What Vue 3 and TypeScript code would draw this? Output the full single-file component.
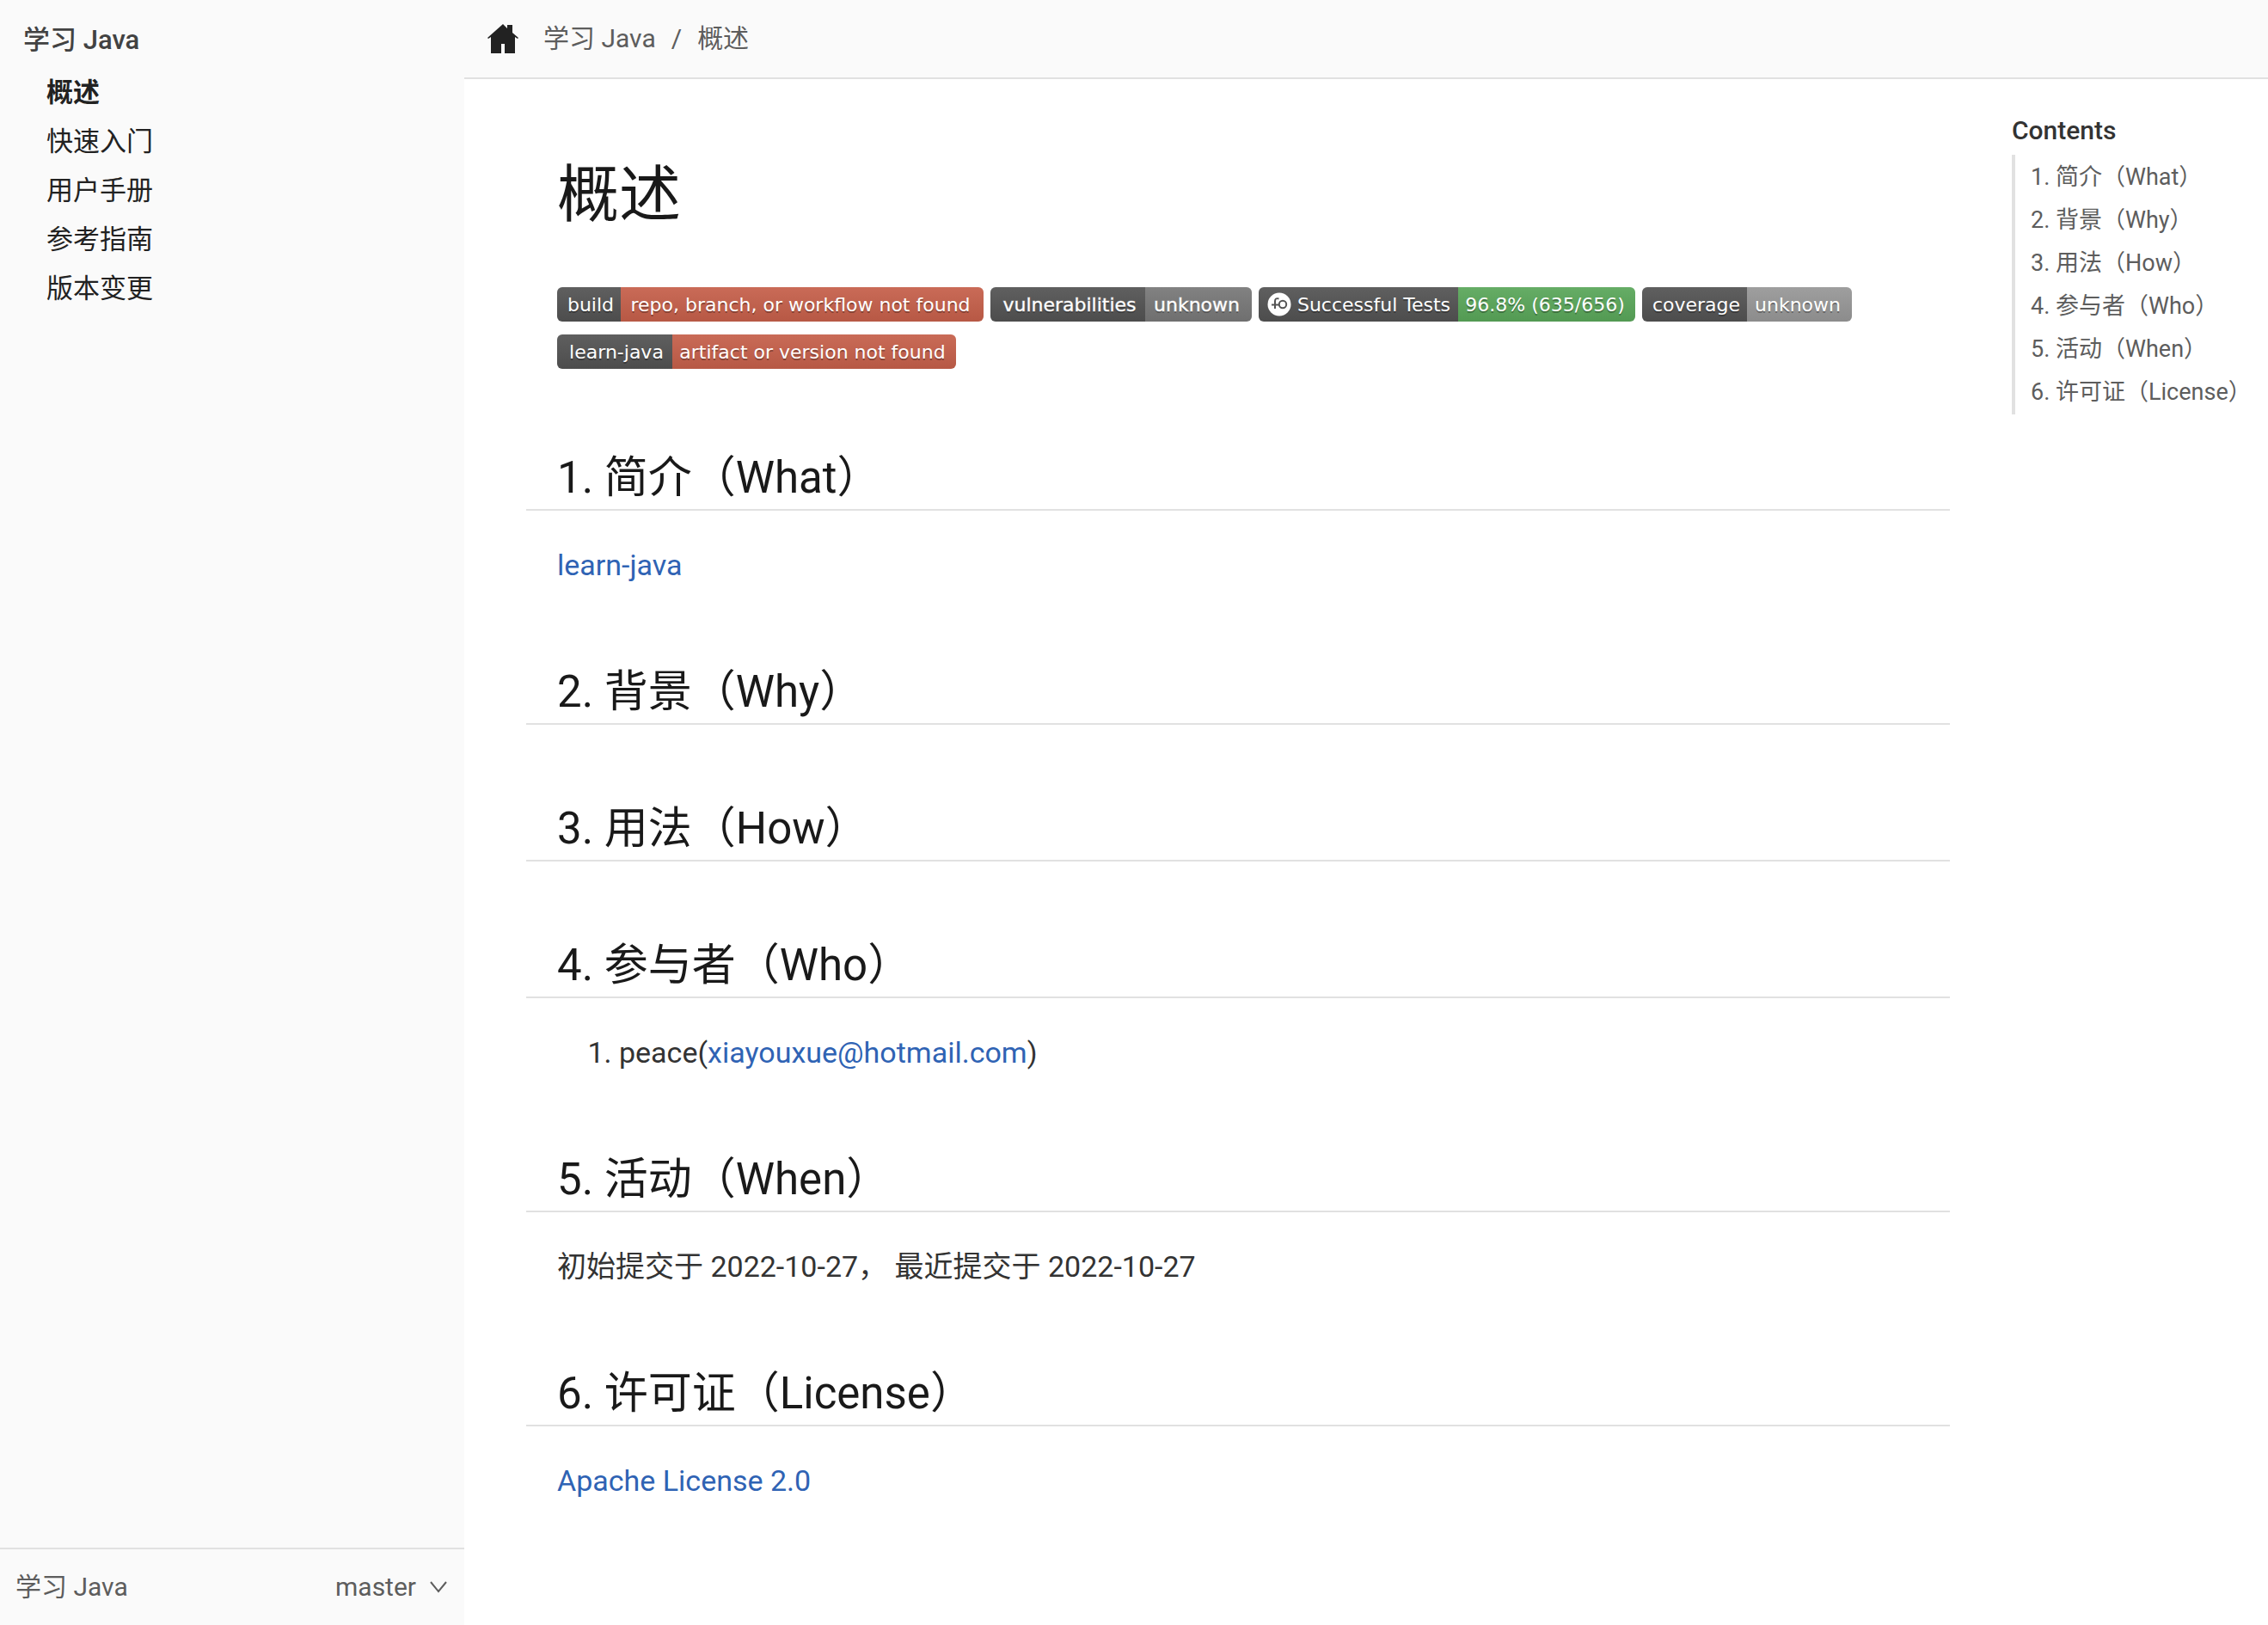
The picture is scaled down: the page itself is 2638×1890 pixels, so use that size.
<script setup lang="ts">
interface Badge {
  label: string
  value: string
  labelWidth: number
  valueWidth: number
  color: string
  heavy?: boolean
  logo?: boolean
}

const navItems = ['概述', '快速入门', '用户手册', '参考指南', '版本变更']
const contents = [
  '1. 简介（What）',
  '2. 背景（Why）',
  '3. 用法（How）',
  '4. 参与者（Who）',
  '5. 活动（When）',
  '6. 许可证（License）',
]
const badges: Badge[] = [
  { label: 'build', value: 'repo, branch, or workflow not found', labelWidth: 74, valueWidth: 422, color: '#cb624c' },
  { label: 'vulnerabilities', value: 'unknown', labelWidth: 180, valueWidth: 124, color: '#7b7b7b', heavy: true },
  { label: 'Successful Tests', value: '96.8% (635/656)', labelWidth: 232, valueWidth: 206, color: '#5cab5c', logo: true },
  { label: 'coverage', value: 'unknown', labelWidth: 122, valueWidth: 122, color: '#9b9b9b' },
  { label: 'learn-java', value: 'artifact or version not found', labelWidth: 134, valueWidth: 330, color: '#cb624c' },
]

const labelCenter = (b: Badge) => (b.logo ? (b.labelWidth + 36) / 2 : b.labelWidth / 2 + 2)
const valueCenter = (b: Badge) => b.labelWidth + b.valueWidth / 2 - 2
</script>

<template>
  <div class="page">
    <aside class="sidebar">
      <nav class="nav">
        <h3><a href="#">学习 Java</a></h3>
        <ul>
          <li v-for="(item, i) in navItems" :key="item" :class="{ current: i === 0 }">
            <a href="#">{{ item }}</a>
          </li>
        </ul>
      </nav>
      <div class="explore">
        <span>学习 Java</span>
        <button type="button">
          master
          <svg width="20" height="14" viewBox="0 0 20 14" aria-hidden="true">
            <path d="M1 1l9 11 9-11" fill="none" stroke="#5d5d5d" stroke-width="2" />
          </svg>
        </button>
      </div>
    </aside>

    <main>
      <div class="toolbar">
        <a href="#" class="home" aria-label="Home">
          <svg width="36" height="36" viewBox="0 0 36 36">
            <path d="M18 1l5 5V2h6v9l7 6-1 1-3-2v19H20V24h-4v11H4V16l-3 2-1-1z" fill="#222" />
          </svg>
        </a>
        <nav class="crumbs">
          <a href="#">学习 Java</a><span>/</span><a href="#">概述</a>
        </nav>
      </div>

      <div class="content">
        <article>
          <h1>概述</h1>
          <div class="badges">
            <a v-for="b in badges" :key="b.label" href="#">
              <svg :width="b.labelWidth + b.valueWidth" height="40" :class="{ heavy: b.heavy }">
                <defs>
                  <linearGradient id="sheen" x2="0" y2="1">
                    <stop offset="0" stop-color="#bbb" stop-opacity=".1" />
                    <stop offset="1" stop-opacity=".1" />
                  </linearGradient>
                </defs>
                <rect :width="b.labelWidth" height="40" fill="#555" />
                <rect :x="b.labelWidth" :width="b.valueWidth" height="40" :fill="b.color" />
                <rect width="100%" height="40" fill="url(#sheen)" />
                <g v-if="b.logo">
                  <circle cx="24" cy="20" r="13.5" fill="#fff" />
                  <circle cx="28" cy="20" r="4.2" fill="none" stroke="#555" stroke-width="2" />
                  <path d="M23.5 13.5c-3-1-4.500 0-4.500 3V25M15 20.500h9" fill="none" stroke="#555" stroke-width="2" />
                </g>
                <g text-anchor="middle">
                  <text class="shade" :x="labelCenter(b)" y="30" aria-hidden="true">{{ b.label }}</text>
                  <text :x="labelCenter(b)" y="28">{{ b.label }}</text>
                  <text class="shade" :x="valueCenter(b)" y="30" aria-hidden="true">{{ b.value }}</text>
                  <text :x="valueCenter(b)" y="28">{{ b.value }}</text>
                </g>
              </svg>
            </a>
          </div>

          <h2>{{ contents[0] }}</h2>
          <p><a href="#">learn-java</a></p>
          <h2>{{ contents[1] }}</h2>
          <h2>{{ contents[2] }}</h2>
          <h2>{{ contents[3] }}</h2>
          <ol>
            <li>peace(<a href="#">xiayouxue@hotmail.com</a>)</li>
          </ol>
          <h2>{{ contents[4] }}</h2>
          <p>初始提交于 2022-10-27， 最近提交于 2022-10-27</p>
          <h2>{{ contents[5] }}</h2>
          <p><a href="#">Apache License 2.0</a></p>
        </article>

        <aside class="toc">
          <h3>Contents</h3>
          <ul>
            <li v-for="item in contents" :key="item"><a href="#">{{ item }}</a></li>
          </ul>
        </aside>
      </div>
    </main>
  </div>
</template>

<style>
body {
  margin: 0;
  background: #fff;
}
</style>

<style scoped>
.page {
  display: flex;
  min-height: 100vh;
  font-family: Roboto, "Noto Sans CJK SC", sans-serif;
  font-size: 34px;
  color: #333;
}
a {
  color: inherit;
  text-decoration: none;
}
h1, h2, h3, p, ul, ol {
  margin: 0;
  padding: 0;
}
ul {
  list-style: none;
}
.sidebar {
  flex: 0 0 540px;
  display: flex;
  flex-direction: column;
  background: #fafafa;
  font-size: 30px;
}
.nav {
  flex: 1;
  padding: 27px;
  font-size: 31px;
  color: #222;
}
.nav h3 {
  font-size: 31px;
  font-weight: 500;
  line-height: 40px;
  color: #424242;
}
.nav ul {
  padding: 20px 27px;
}
.nav li {
  line-height: 41px;
  padding-bottom: 16px;
}
.nav .current {
  font-weight: 700;
}
.explore {
  display: flex;
  justify-content: space-between;
  align-items: center;
  height: 88px;
  padding: 0 20px 0 18px;
  border-top: 2px solid #e1e1e1;
  line-height: 40px;
  color: #5d5d5d;
}
.explore button {
  display: flex;
  align-items: center;
  gap: 16px;
  padding: 0;
  border: 0;
  background: none;
  font: inherit;
  color: inherit;
}
main {
  flex: 1;
  min-width: 0;
}
.toolbar {
  display: flex;
  align-items: center;
  height: 90px;
  padding: 0 27px;
  background: #fafafa;
  border-bottom: 2px solid #e1e1e1;
  font-size: 30px;
  line-height: 40px;
  color: #5d5d5d;
}
.home {
  display: flex;
}
.crumbs {
  padding-left: 29px;
}
.crumbs span {
  padding: 0 18px;
}
.content {
  display: flex;
}
article {
  flex: 1;
  min-width: 0;
  margin: 0 108px;
  padding-bottom: 72px;
}
h1 {
  margin-top: 89px;
  font-size: 72px;
  font-weight: 400;
  line-height: 92px;
  color: #191919;
}
.badges {
  display: flex;
  flex-wrap: wrap;
  gap: 15px 8px;
  margin: 61px 0 80px;
}
.badges a {
  display: flex;
}
.badges svg {
  border-radius: 6px;
}
.badges text {
  font-family: Verdana, "DejaVu Sans", sans-serif;
  font-size: 22px;
  fill: #fff;
}
.badges .shade {
  fill: #010101;
  fill-opacity: 0.3;
}
.badges .heavy text:not(.shade) {
  stroke: #fff;
  stroke-opacity: 0.4;
  stroke-width: 1px;
}
h2 {
  margin: 74px -36px 0;
  padding: 14px 36px 4px;
  border-bottom: 2px solid #e1e1e1;
  font-size: 51px;
  font-weight: 400;
  line-height: 65px;
  color: #191919;
}
article p,
article ol {
  margin-top: 36px;
  line-height: 54px;
}
article ol {
  padding-left: 72px;
}
article p a,
article ol a {
  color: #2f63b4;
}
.toc {
  flex: 0 0 298px;
  margin-top: 38px;
  color: #5d5d5d;
}
.toc h3 {
  font-size: 30px;
  font-weight: 500;
  line-height: 44px;
  color: #333;
}
.toc ul {
  margin-top: 6px;
  padding: 1px 0 1px 18px;
  border-left: 4px solid #e1e1e1;
  font-size: 27px;
  line-height: 50px;
  white-space: nowrap;
}
</style>
